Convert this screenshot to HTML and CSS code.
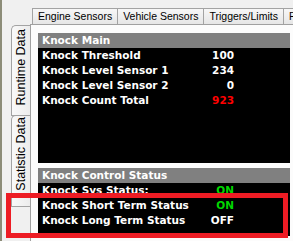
FILE: index.html
```html
<!DOCTYPE html>
<html lang="en">
<head>
  <meta charset="UTF-8" />
  <title>Knock Data</title>
  <link rel="stylesheet" href="styles.css">
</head>
<body>
  <div class="window">
    <div class="tabbar">
      <div class="tab">Engine Sensors</div>
      <div class="tab">Vehicle Sensors</div>
      <div class="tab">Triggers/Limits</div>
      <div class="tab">F</div>
    </div>
    <div class="main">
      <div class="side-tabs">
        <div class="vtab first"><span>Runtime Data</span></div>
        <div class="vtab second"><span>Statistic Data</span></div>
      </div>
      <div class="panel">
        <div class="block top-block">
          <div class="head">Knock Main</div>
          <div class="row"><span>Knock Threshold</span><span class="val">100</span></div>
          <div class="row"><span>Knock Level Sensor 1</span><span class="val">234</span></div>
          <div class="row"><span>Knock Level Sensor 2</span><span class="val">0</span></div>
          <div class="row"><span>Knock Count Total</span><span class="val red">923</span></div>
        </div>
        <div class="block bottom-block">
          <div class="head">Knock Control Status</div>
          <div class="row"><span>Knock Sys Status:</span><span class="val green">ON</span></div>
          <div class="row"><span>Knock Short Term Status</span><span class="val green">ON</span></div>
          <div class="row"><span>Knock Long Term Status</span><span class="val">OFF</span></div>
        </div>
      </div>
    </div>
    <div class="highlight"></div>
  </div>
</body>
</html>
```

FILE: styles.css
```css
body {
  margin: 0;
  background: #f0f0f0;
  font-family: "Liberation Sans", Arial, sans-serif;
  font-size: 11px;
}
.window {
  position: relative;
  width: 293px;
  height: 241px;
  overflow: hidden;
  border-left: 2px solid #8c8c78;
  box-sizing: border-box;
}
.tabbar {
  display: flex;
  margin-top: 8px;
  padding-left: 30px;
  height: 16px;
}
.tab {
  height: 15px;
  line-height: 15px;
  padding: 0 5px;
  border: 1px solid #a3a3a3;
  border-bottom: none;
  margin-right: -1px;
  background: linear-gradient(#f7f7f7, #e6e6e6);
  color: #000;
  font-size: 10.5px;
  white-space: nowrap;
}
.main {
  display: flex;
  height: 217px;
}
.side-tabs {
  width: 28px;
  padding-top: 1px;
  display: flex;
  flex-direction: column;
  align-items: flex-end;
}
.vtab {
  width: 19px;
  border: 1px solid #a3a3a3;
  border-right: none;
  border-top-left-radius: 5px;
  background: linear-gradient(to right, #f9f9f9, #ececec);
  display: flex;
  flex-direction: column;
  align-items: center;
  box-sizing: border-box;
  margin-bottom: -1px;
}
.vtab span {
  writing-mode: vertical-rl;
  transform: rotate(180deg);
  line-height: 17px;
  font-size: 12.5px;
}
.vtab.first {
  height: 91px;
  padding-top: 3px;
}
.vtab.second {
  height: 92px;
  padding-top: 1px;
}
.panel {
  flex: 1;
  border-left: 1px solid #a0a0a0;
  border-top: 1px solid #a0a0a0;
  background: #fcfcfc;
  padding: 8px 3px 0 7px;
}
.block {
  background: #000;
  color: #fff;
  font-family: "DejaVu Sans", Verdana, sans-serif;
  font-size: 10.5px;
  font-weight: bold;
}
.top-block {
  height: 130px;
  margin-bottom: 5px;
}
.bottom-block {
  height: 68px;
}
.head {
  background: #808080;
  height: 15px;
  line-height: 15px;
  padding-left: 4px;
}
.row {
  display: flex;
  height: 15px;
  line-height: 15px;
  padding-left: 4px;
}
.row span:first-child {
  width: 151px;
  white-space: nowrap;
}
.val {
  width: 41px;
  text-align: right;
}
.red {
  color: #ff0000;
}
.green {
  color: #00d800;
}
.highlight {
  position: absolute;
  left: 4px;
  top: 193px;
  width: 282px;
  height: 45px;
  border: 5px solid #ed1c24;
  box-sizing: border-box;
}
```
